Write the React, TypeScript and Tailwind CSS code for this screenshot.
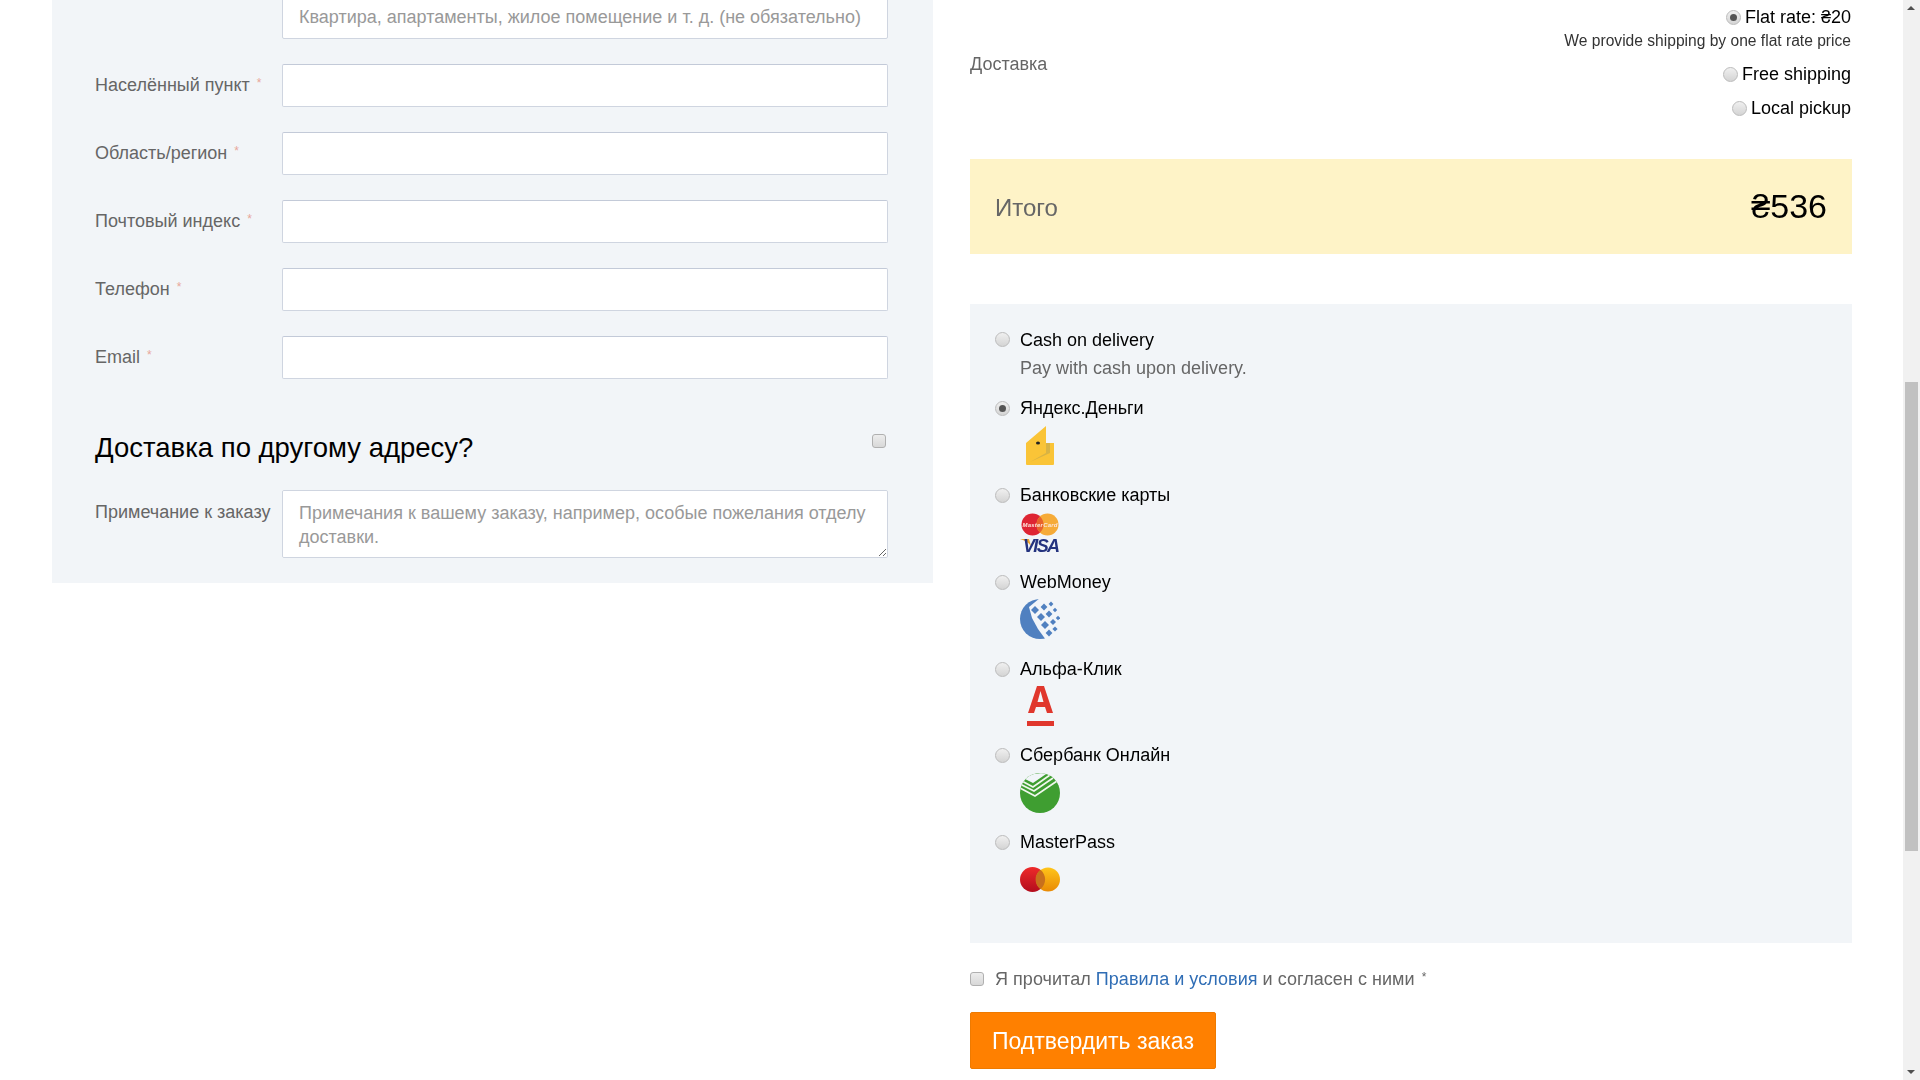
import React from "react";

const Req = () => <span className="ml-[2px] align-[4px] text-[12px] text-[#e8a79a]">*</span>;

const Radio = ({ checked = false, lift = false }: { checked?: boolean; lift?: boolean }) => (
  <span
    className={
      lift
        ? "-mt-[1px] flex h-[15px] w-[15px] shrink-0 items-center justify-center rounded-full border border-[#bbb] bg-linear-to-b from-[#f0f0f0] to-[#d4d4d4]"
        : "flex h-[15px] w-[15px] shrink-0 items-center justify-center rounded-full border border-[#bbb] bg-linear-to-b from-[#f0f0f0] to-[#d4d4d4]"
    }
  >
    {checked && <span className="h-[7px] w-[7px] rounded-full bg-[#555]" />}
  </span>
);

const Check = () => (
  <span className="block h-[14px] w-[14px] shrink-0 rounded-[3px] border border-[#b0b0b0] bg-linear-to-b from-[#ededed] to-[#d8d8d8]" />
);

const Field = ({ label }: { label: string }) => (
  <div className="mt-[25px] flex items-center">
    <label className="-mt-[3px] w-[187px] shrink-0 text-[#666]">
      {label} <Req />
    </label>
    <input
      type="text"
      className="h-[43px] w-[606px] rounded-[2px] border border-[#cfd5e0] border-t-[#c3cad8] bg-white px-4 outline-none"
    />
  </div>
);

const Wallet = () => (
  <svg width="40" height="40" viewBox="0 0 40 40">
    <path d="M26 0V17H34V38a1 1 0 0 1-1 1H7a1 1 0 0 1-1-1V17Z" fill="#fac437" />
    <path d="M26 17H30V27L10 36 26 27Z" fill="#d8b344" />
    <ellipse cx="18" cy="17" rx="2" ry="1.5" fill="#222" />
  </svg>
);

const Cards = () => (
  <svg width="40" height="44" viewBox="0 0 40 44" className="-mb-[4px]">
    <circle cx="12.5" cy="11.5" r="11" fill="#de2533" />
    <circle cx="27.5" cy="11.5" r="11" fill="#f6ab38" />
    <path d="M20 3.400a11 11 0 0 1 0 16.200a11 11 0 0 1 0-16.200Z" fill="#e8632c" />
    <text x="20" y="13.500" textAnchor="middle" fontSize="6" fontWeight="700" fontStyle="italic" fill="#fde6dc" textLength="35">
      MasterCard
    </text>
    <path d="M0 26H9L11 33C8 29 4 27 0 26Z" fill="#efa52f" />
    <text x="3" y="39" fontSize="18" fontWeight="700" fontStyle="italic" fill="#24337f" textLength="37">
      VISA
    </text>
  </svg>
);

const diamonds = [
  [15, 11, 4],
  [24, 8, 3.4],
  [31, 5, 2.4],
  [21, 18, 4],
  [29, 15, 3.4],
  [35, 11, 2.2],
  [25, 26, 4],
  [33, 23, 3],
  [38, 19, 2.2],
  [29, 34, 3.4],
  [35, 30, 2.6],
];

const WebMoney = () => (
  <svg width="40" height="40" viewBox="0 0 40 40" className="relative -top-px">
    <circle cx="20" cy="20" r="20" fill="#5080c0" />
    <path d="M20 -1L9 8 12 19 18 30 26 41H41V-1Z" fill="#f2f5f9" />
    {diamonds.map(([x, y, r]) => (
      <path key={`${x}-${y}`} d={`M${x} ${y - r}L${x + r} ${y} ${x} ${y + r} ${x - r} ${y}Z`} fill="#5080c0" />
    ))}
  </svg>
);

const Alfa = () => (
  <svg width="40" height="40" viewBox="0 0 40 40" className="relative -top-px">
    <path
      fillRule="evenodd"
      d="M17 0H24L33 27H27L25 21H16L14 27H8ZM20.500 5L17.500 16H23.500Z"
      fill="#e0372d"
    />
    <rect x="7" y="35" width="27" height="5" fill="#e0372d" />
  </svg>
);

const Sber = () => (
  <svg width="40" height="40" viewBox="0 0 40 40">
    <defs>
      <clipPath id="sberDome">
        <circle cx="20" cy="20" r="20" />
      </clipPath>
    </defs>
    <g clipPath="url(#sberDome)">
      <rect width="40" height="40" fill="#3f9e31" />
      <path d="M-1 3L13 10 29 -1Z" fill="#f2f5f9" />
      <path d="M0 7L13 14 30 2M0 11L14 18 33 5M0 15L15 23 37 8" fill="none" stroke="#f0f7ed" strokeWidth="1.700" />
    </g>
  </svg>
);

const MasterPass = () => (
  <svg width="40" height="40" viewBox="0 0 40 40">
    <defs>
      <linearGradient id="mpRed" x1="0" y1="0" x2="0" y2="1">
        <stop offset="0" stopColor="#ee2a2a" />
        <stop offset="1" stopColor="#b30d1d" />
      </linearGradient>
      <linearGradient id="mpOrange" x1="0" y1="0" x2="0" y2="1">
        <stop offset="0" stopColor="#ffc51a" />
        <stop offset="1" stopColor="#e98a05" />
      </linearGradient>
    </defs>
    <circle cx="12.500" cy="19.500" r="12.500" fill="url(#mpRed)" />
    <circle cx="28" cy="19.500" r="12" fill="url(#mpOrange)" />
    <path d="M20.500 9.800a12.500 12.500 0 0 1 0 19.400a12 12 0 0 1 0-19.400Z" fill="#c8701c" />
  </svg>
);

const methods: { name: string; icon: React.ReactNode; checked?: boolean; gap: string }[] = [
  { name: "Яндекс.Деньги", icon: <Wallet />, checked: true, gap: "mt-[16px]" },
  { name: "Банковские карты", icon: <Cards />, gap: "mt-[17px]" },
  { name: "WebMoney", icon: <WebMoney />, gap: "mt-[17px]" },
  { name: "Альфа-Клик", icon: <Alfa />, gap: "mt-[17px]" },
  { name: "Сбербанк Онлайн", icon: <Sber />, gap: "mt-[16px]" },
  { name: "MasterPass", icon: <MasterPass />, gap: "mt-[17px]" },
];

const ShipRow = ({ children, checked = false }: { children: React.ReactNode; checked?: boolean }) => (
  <div className="flex items-center justify-end gap-[4px] leading-6 text-black">
    <Radio checked={checked} />
    <span>{children}</span>
  </div>
);

export default function App() {
  return (
    <div className="flex h-screen overflow-hidden bg-white [font-family:'Liberation_Sans',sans-serif] text-[18px] leading-6">
      <div className="ml-[52px] h-[583px] w-[881px] bg-[#f2f5f8] px-[43px]">
        <div className="-mt-[4px] flex">
          <div className="w-[187px] shrink-0" />
          <input
            type="text"
            placeholder="Квартира, апартаменты, жилое помещение и т. д. (не обязательно)"
            className="h-[43px] w-[606px] rounded-[2px] border border-[#cfd5e0] bg-white px-4 outline-none placeholder:text-[#999]"
          />
        </div>
        <Field label="Населённый пункт" />
        <Field label="Область/регион" />
        <Field label="Почтовый индекс" />
        <Field label="Телефон" />
        <Field label="Email" />

        <div className="mt-[49px] flex items-start justify-between pr-[4px]">
          <h3 className="text-[27.5px] leading-10 font-normal text-black">Доставка по другому адресу?</h3>
          <span className="mt-[6px] block">
            <Check />
          </span>
        </div>

        <div className="mt-[22px] flex">
          <label className="mt-[10px] w-[187px] shrink-0 whitespace-nowrap text-[#666]">Примечание к заказу</label>
          <textarea
            placeholder="Примечания к вашему заказу, например, особые пожелания отделу доставки."
            className="h-[68px] w-[606px] rounded-[2px] border border-[#cfd5e0] bg-white px-4 py-[10px] outline-none placeholder:text-[#999]"
          />
        </div>
      </div>

      <div className="ml-[37px] w-[882px]">
        <div className="flex h-[159px] items-start justify-between pr-[1px]">
          <div className="pt-[52px] text-[#666]">Доставка</div>
          <div className="pt-[5px] text-right">
            <ShipRow checked>Flat rate: ₴20</ShipRow>
            <div className="text-[15.6px] leading-6 text-[#333]">We provide shipping by one flat rate price</div>
            <div className="mt-[9px]">
              <ShipRow>Free shipping</ShipRow>
            </div>
            <div className="mt-[10px]">
              <ShipRow>Local pickup</ShipRow>
            </div>
          </div>
        </div>

        <div className="flex h-[95px] items-center justify-between bg-[#fef3c7] px-[25px]">
          <span className="mt-[2px] text-[24px] text-[#666]">Итого</span>
          <span className="-mt-[1px] text-[34px] text-black">₴536</span>
        </div>

        <div className="mt-[50px] h-[639px] bg-[#f2f5f8] px-[25px] pt-[24px]">
          <div className="flex items-center gap-[10px] text-black">
            <Radio lift />
            Cash on delivery
          </div>
          <div className="mt-[4px] pl-[25px] text-[#666]">Pay with cash upon delivery.</div>
          {methods.map((m) => (
            <div key={m.name} className={m.gap}>
              <div className="flex items-center gap-[10px] text-black">
                <Radio checked={m.checked} />
                {m.name}
              </div>
              <div className="mt-[6px] pl-[25px]">{m.icon}</div>
            </div>
          ))}
        </div>

        <div className="mt-[22px] flex items-center gap-[11px] text-[#666]">
          <span className="mt-[2px] block">
            <Check />
          </span>
          <span className="tracking-[0.04px]">
            Я прочитал <a className="text-[#2f6db5]">Правила и условия</a> и согласен с ними{" "}
            <span className="ml-[2px] align-[4px] text-[12px]">*</span>
          </span>
        </div>

        <button className="mt-[21px] h-[57px] rounded-[2px] border border-[#ee7a00] bg-[#ff8000] px-[21px] text-[23px] text-white">
          Подтвердить заказ
        </button>
      </div>

      <div className="relative ml-auto h-full w-[17px] shrink-0 bg-[#f1f1f1]">
        <div className="absolute top-[6px] left-[4px] h-0 w-0 border-x-[4px] border-b-[4px] border-x-transparent border-b-[#505050]" />
        <div className="absolute top-[382px] left-[2px] h-[469px] w-[13px] bg-[#c1c1c1]" />
        <div className="absolute bottom-[6px] left-[4px] h-0 w-0 border-x-[4px] border-t-[4px] border-x-transparent border-t-[#505050]" />
      </div>
    </div>
  );
}
